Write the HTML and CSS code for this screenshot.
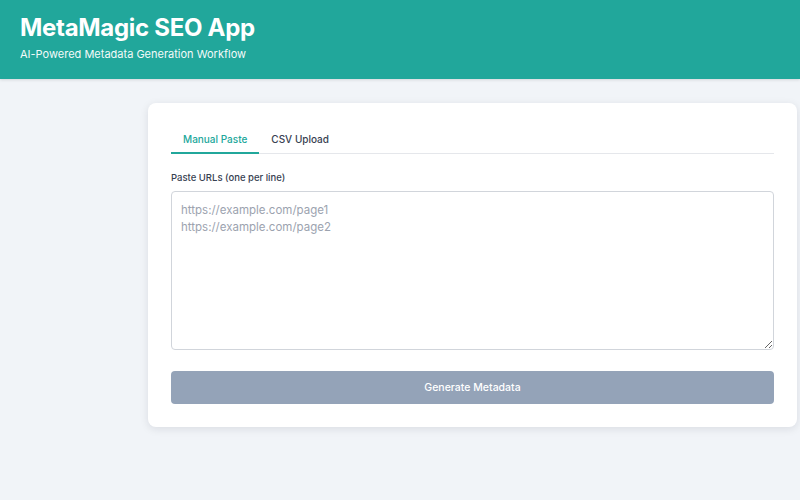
FILE: index.html
```html
<!DOCTYPE html>
<html lang="en">
<head>
<meta charset="utf-8">
<title>MetaMagic SEO App</title>
<link rel="stylesheet" href="styles.css">
</head>
<body>
<header class="app-header">
  <h1 class="app-title">MetaMagic SEO App</h1>
  <p class="app-subtitle">AI-Powered Metadata Generation Workflow</p>
</header>
<main class="layout">
  <section class="card">
    <nav class="tabs">
      <button class="tab tab-active">Manual Paste</button>
      <button class="tab">CSV Upload</button>
    </nav>
    <label class="field-label" for="urls">Paste URLs (one per line)</label>
    <textarea id="urls" class="url-input" placeholder="https://example.com/page1&#10;https://example.com/page2"></textarea>
    <button class="generate-btn" disabled>Generate Metadata</button>
  </section>
</main>
</body>
</html>
```
FILE: styles.css
```css
* { box-sizing: border-box; }
html, body { margin: 0; padding: 0; }
body {
  background: #f1f4f8;
  font-family: Inter, "Noto Sans", "Liberation Sans", sans-serif;
  color: #1f2937;
  height: 500px;
  overflow: hidden;
}
.app-header {
  background: #21a79b;
  color: #ffffff;
  height: 79px;
  padding: 13px 20px 0;
  box-shadow: 0 1px 3px rgba(0,0,0,0.12);
}
.app-title {
  margin: 0;
  font-size: 24px;
  font-weight: 700;
  line-height: 30px;
  letter-spacing: -0.3px;
}
.app-subtitle {
  margin: 4px 0 0;
  font-size: 11px;
  line-height: 14px;
  opacity: 0.95;
}
.layout {
  display: flex;
  padding: 24px 3px 0 148px;
}
.card {
  flex: 1;
  background: #ffffff;
  border-radius: 8px;
  box-shadow: 0 2px 8px rgba(15, 23, 42, 0.10);
  padding: 24px 23px 23px;
  display: flex;
  flex-direction: column;
}
.tabs {
  display: flex;
  border-bottom: 1px solid #e5e7eb;
  margin-bottom: 18px;
}
.tab {
  background: none;
  border: none;
  font-family: inherit;
  font-size: 10px;
  font-weight: 500;
  color: #374151;
  padding: 6px 12px 7px;
  margin-bottom: -1px;
  border-bottom: 2px solid transparent;
  cursor: pointer;
}
.tab-active {
  color: #21a79b;
  border-bottom-color: #21a79b;
}
.field-label {
  font-size: 9.5px;
  font-weight: 500;
  color: #374151;
  margin-bottom: 8px;
}
.url-input {
  height: 159px;
  border: 1px solid #d1d5db;
  border-radius: 4px;
  padding: 10px 9px;
  font-family: inherit;
  font-size: 11.5px;
  line-height: 17px;
  color: #111827;
  resize: vertical;
  margin-bottom: 21px;
}
.url-input::placeholder { color: #9ca3af; }
.generate-btn {
  height: 33px;
  border: none;
  border-radius: 4px;
  background: #94a3b8;
  color: #ffffff;
  font-family: inherit;
  font-size: 10.5px;
  font-weight: 500;
}
```
